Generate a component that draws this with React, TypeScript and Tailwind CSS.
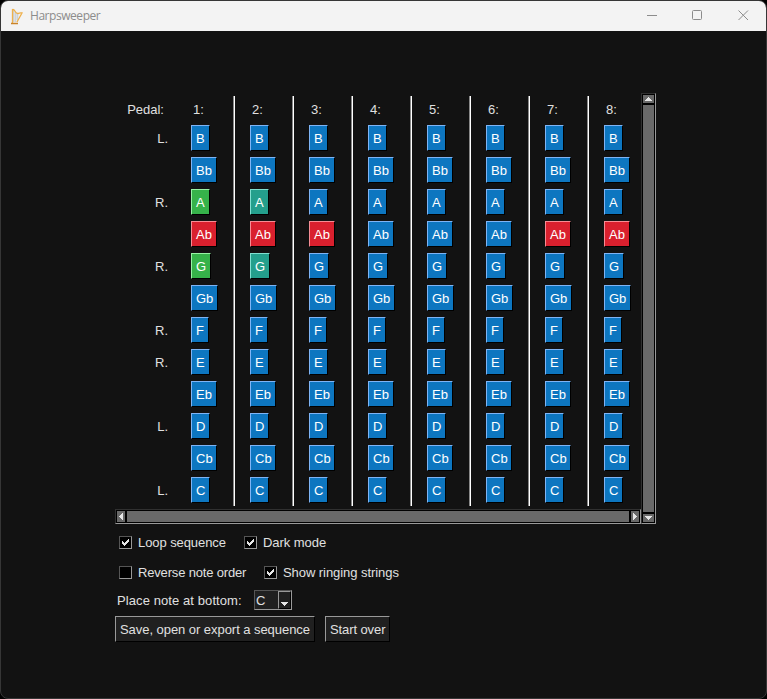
import type { ReactNode } from 'react';

const BLUE = 'bg-[#0d76c0] border-t-[#7fb4f5] border-l-[#7fb4f5]';
const RED = 'bg-[#d9202e] border-t-[#f58d95] border-l-[#f58d95]';
const GREEN = 'bg-[#36b24a] border-t-[#98f3a5] border-l-[#98f3a5]';
const TEAL = 'bg-[#249f8c] border-t-[#80dfd0] border-l-[#80dfd0]';

const NOTES = [
  { name: 'B', foot: 'L.', width: 'w-[19px]' },
  { name: 'Bb', foot: '', width: 'w-[26px]' },
  { name: 'A', foot: 'R.', width: 'w-[19px]' },
  { name: 'Ab', foot: '', width: 'w-[26px]' },
  { name: 'G', foot: 'R.', width: 'w-[20px]' },
  { name: 'Gb', foot: '', width: 'w-[27px]' },
  { name: 'F', foot: 'R.', width: 'w-[18px]' },
  { name: 'E', foot: 'R.', width: 'w-[19px]' },
  { name: 'Eb', foot: '', width: 'w-[26px]' },
  { name: 'D', foot: 'L.', width: 'w-[19px]' },
  { name: 'Cb', foot: '', width: 'w-[26px]' },
  { name: 'C', foot: 'L.', width: 'w-[19px]' },
];

const STEPS = [1, 2, 3, 4, 5, 6, 7, 8];

function tone(note: string, step: number) {
  if (note === 'Ab' && ![4, 5, 6].includes(step)) return RED;
  if (note === 'A' || note === 'G') {
    if (step === 1) return GREEN;
    if (step === 2) return TEAL;
  }
  return BLUE;
}

function Arrow({ points, w, h }: { points: string; w: number; h: number }) {
  return (
    <svg width={w} height={h} viewBox={`0 0 ${w} ${h}`} className="shrink-0" shapeRendering="crispEdges">
      <polygon points={points} fill="#e6e6e6" />
    </svg>
  );
}

function Check({ checked, className, children }: { checked?: boolean; className: string; children: ReactNode }) {
  return (
    <label className="flex items-center gap-[6px]">
      <span className="-mt-px flex h-[13px] w-[13px] shrink-0 items-center justify-center border border-t-[#555] border-l-[#555] border-r-[#999] border-b-[#999] bg-black">
        {checked && (
          <svg width="7" height="7" viewBox="0 0 7 7" shapeRendering="crispEdges">
            <path d="M0 2h1v3h-1zM1 3h1v3h-1zM2 4h1v3h-1zM3 3h1v3h-1zM4 2h1v3h-1zM5 1h1v3h-1zM6 0h1v3h-1z" fill="#e6e6e6" />
          </svg>
        )}
      </span>
      <span className={`whitespace-nowrap leading-5 ${className}`}>{children}</span>
    </label>
  );
}

function Sequencer() {
  return (
    <div className="flex h-[416px] w-[526px]">
      <div className="w-[53px] shrink-0 text-right">
        <div className="h-[29px] pr-[4px] pt-[3px] leading-[28px]">Pedal:</div>
        {NOTES.map((n) => (
          <div key={n.name} className="h-8 pt-[3px] leading-[28px]">{n.foot}</div>
        ))}
      </div>
      <div className="flex shrink-0 pl-[23px]">
        {STEPS.map((s) => (
          <div key={s} className={s < 8 ? 'flex w-[59px]' : 'flex w-[42px]'}>
            <div className="w-[42px]">
              <div className="h-[29px] pl-[2px] pt-[3px] leading-[28px]">{s}:</div>
              {NOTES.map((n) => (
                <div key={n.name} className="h-8 pt-[3px]">
                  <button className={`${n.width} ${tone(n.name, s)} block h-[26px] overflow-hidden border border-r-black border-b-black pl-[4px] text-left leading-[25px] text-white`}>
                    {n.name}
                  </button>
                </div>
              ))}
            </div>
            {s < 8 && <div className="mt-[3px] h-[410px] w-[2px] border-l border-[#888] bg-white" />}
          </div>
        ))}
      </div>
    </div>
  );
}

function VerticalScroll() {
  return (
    <div className="flex h-[431px] w-[15px] flex-col border border-t-[#303030] border-l-[#303030] border-r-[#999] border-b-[#999] bg-black p-px">
      <div className="flex h-[8px] items-center justify-center bg-[#696969]"><Arrow w={7} h={4} points="3,0 4,0 7,4 0,4" /></div>
      <div className="my-[2px] flex-1 bg-[#696969]" />
      <div className="flex h-[8px] items-center justify-center bg-[#696969]"><Arrow w={7} h={4} points="0,0 7,0 4,4 3,4" /></div>
    </div>
  );
}

function HorizontalScroll() {
  return (
    <div className="flex h-[15px] w-[526px] border border-t-[#303030] border-l-[#303030] border-r-[#999] border-b-[#999] bg-black p-px">
      <div className="flex w-[8px] items-center justify-center bg-[#696969]"><Arrow w={4} h={7} points="4,0 4,7 0,4 0,3" /></div>
      <div className="mx-[2px] flex-1 bg-[#696969]" />
      <div className="flex w-[8px] items-center justify-center bg-[#696969]"><Arrow w={4} h={7} points="0,0 4,3 4,4 0,7" /></div>
    </div>
  );
}

function TitleBar() {
  return (
    <header className="flex h-[30px] shrink-0 items-center bg-[#f3f3f3] pl-[10px] text-[#8c8c8c]">
      <svg width="12" height="17" viewBox="0 0 12 17" fill="none">
        <path d="M2.500 2v12M4.500 4v10M6.500 6v6" stroke="#cdd2d6" strokeWidth="1.600" />
        <path d="M1.500 15V1.500C4 .5 4 6 7 5.500 9 5 9 4.500 11 5L6 14" stroke="#eeb04b" strokeWidth="1.300" />
        <path d="M0 15.500h7" stroke="#c98328" strokeWidth="1.500" />
      </svg>
      <span className="ml-[7px] font-['Open_Sans',sans-serif] text-[12px] tracking-[-0.450px]">Harpsweeper</span>
      <svg className="ml-auto mr-[16px]" width="103" height="12" viewBox="0 0 103 12" fill="none" stroke="#8c8c8c">
        <path d="M0 5.500h10" />
        <rect x="45.500" y=".5" width="9" height="9" rx="1" />
        <path d="M91.500 .5l9.500 9.500M101 .5l-9.500 9.500" />
      </svg>
    </header>
  );
}

export default function App() {
  return (
    <div className="h-[699px] w-[767px] bg-black">
      <div className="flex h-full flex-col overflow-hidden rounded-lg border border-[#363636] bg-[#121212] font-['Liberation_Sans',Arial,sans-serif] text-[13px] text-[#e0e0e0]">
        <TitleBar />
        <main className="flex flex-col items-start pl-[114px] pt-[62px]">
          <div className="flex">
            <div>
              <Sequencer />
              <HorizontalScroll />
            </div>
            <VerticalScroll />
          </div>
          <div className="ml-[4px] mt-[9px] flex h-5 items-center gap-[18px]">
            <Check checked className="w-[88px] tracking-[-0.080px]">Loop sequence</Check>
            <Check checked className="tracking-[-0.050px]">Dark mode</Check>
          </div>
          <div className="ml-[4px] mt-[10px] flex h-5 items-center gap-[18px]">
            <Check className="w-[108px] tracking-[-0.170px]">Reverse note order</Check>
            <Check checked className="tracking-[-0.060px]">Show ringing strings</Check>
          </div>
          <div className="ml-[2px] mt-[7px] flex h-5 items-center">
            <span className="w-[137px] pt-px tracking-[0.090px]">Place note at bottom:</span>
            <button className="flex h-5 w-[38px] border border-t-[#555] border-l-[#555] border-r-[#999] border-b-[#999] bg-[#202020] pl-px text-left leading-[19px]">
              <span className="w-[22px]">C</span>
              <span className="flex h-[18px] w-[13px] items-end justify-center border border-t-[#999] border-l-[#999] border-r-black border-b-black pb-[2px]">
                <Arrow w={7} h={4} points="0,0 7,0 4,4 3,4" />
              </span>
            </button>
          </div>
          <div className="mt-[6px] flex gap-[10px]">
            <button className="h-[26px] w-[200px] whitespace-nowrap border border-t-[#999] border-l-[#999] border-r-black border-b-black bg-[#202020] pl-[4px] pt-px text-left tracking-[-0.050px]">Save, open or export a sequence</button>
            <button className="h-[26px] w-[65px] whitespace-nowrap border border-t-[#999] border-l-[#999] border-r-black border-b-black bg-[#202020] pl-[4px] pt-px text-left tracking-[-0.100px]">Start over</button>
          </div>
        </main>
      </div>
    </div>
  );
}
